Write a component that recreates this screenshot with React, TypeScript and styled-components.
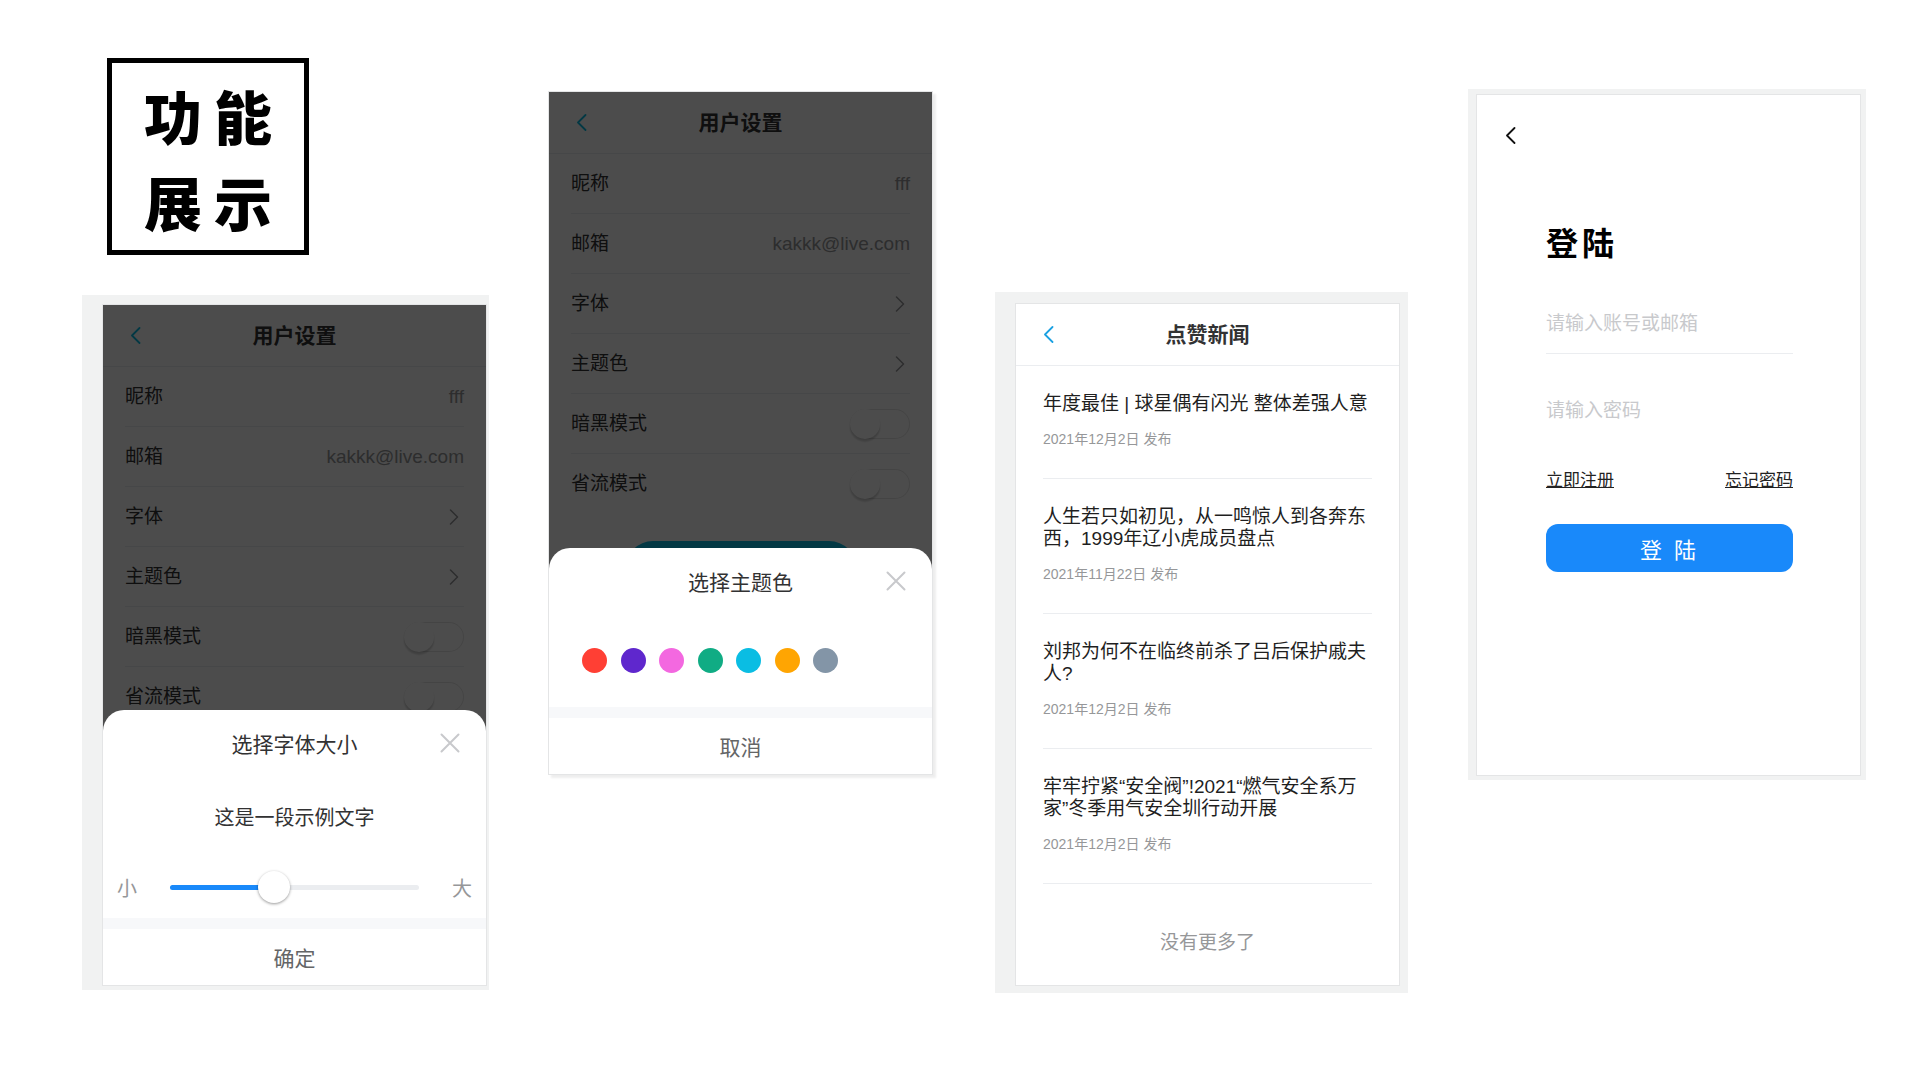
import React from 'react';
import styled, { createGlobalStyle } from 'styled-components';

const FONT = `"Liberation Sans", "Noto Sans CJK SC", sans-serif`;

const GlobalStyle = createGlobalStyle`
  html, body { margin: 0; padding: 0; background: #fff; }
  body { font-family: ${FONT}; width: 1920px; height: 1080px; overflow: hidden; }
  * { box-sizing: border-box; }
`;

// Page layout
const Page = styled.div`
  display: flex;
  align-items: flex-start;
  width: 1920px;
  height: 1080px;
  padding-left: 82px;
`;

const Column = styled.div<{ $top: number; $left?: number }>`
  display: flex;
  flex-direction: column;
  align-items: flex-start;
  margin-top: ${p => p.$top}px;
  margin-left: ${p => p.$left ?? 0}px;
`;

const TitleBox = styled.div`
  width: 202px;
  height: 197px;
  margin: 0 0 40px 25px;
  padding-top: 2px;
  border: 5px solid #000;
  display: flex;
  flex-direction: column;
  align-items: center;
  justify-content: center;
  font-family: "Noto Sans CJK SC", sans-serif;
  font-weight: 900;
  font-size: 58px;
  line-height: 86px;
  letter-spacing: 12px;
  color: #000;

  span {
    padding-left: 12px;
  }
`;

// Screenshot frames
const Frame = styled.div<{ $pad: string }>`
  padding: ${p => p.$pad};
  background: #f1f2f2;
`;

const Screen = styled.div<{ $height: number; $shadow?: boolean }>`
  position: relative;
  width: 385px;
  height: ${p => p.$height}px;
  background: #fff;
  overflow: hidden;
  border: 1px solid #e4e5e6;
  box-shadow: ${p => (p.$shadow ? '3px 3px 2px rgba(0, 0, 0, 0.07)' : 'none')};
`;

// Nav bar
const NavBar = styled.div`
  height: 62px;
  display: grid;
  grid-template-columns: 1fr auto 1fr;
  align-items: center;
  border-bottom: 1px solid #ebedf0;
`;

const NavBack = styled.span<{ $color: string }>`
  display: flex;
  padding-left: 27px;
  color: ${p => p.$color};
`;

const NavTitle = styled.div`
  font-size: 21px;
  font-weight: 700;
  color: #323233;
  line-height: 30px;
`;

// Settings rows
const Row = styled.div<{ $last?: boolean }>`
  height: 60px;
  margin: 0 22px;
  display: flex;
  align-items: center;
  justify-content: space-between;
  border-bottom: ${p => (p.$last ? 'none' : '1px solid #ebedf0')};
  font-size: 19px;
  line-height: 26px;
`;

const RowLabel = styled.span`
  color: #323233;
`;

const RowValue = styled.span`
  color: #969799;
`;

const Chevron = styled.span`
  display: flex;
  margin-right: 5px;
  color: #969799;
`;

const Switch = styled.span`
  width: 60px;
  height: 30px;
  border-radius: 15px;
  border: 1px solid rgba(0, 0, 0, 0.1);
  background: #fff;
  display: flex;
  align-items: center;
`;

const Knob = styled.span`
  width: 30px;
  height: 30px;
  margin: -1px;
  border-radius: 50%;
  background: #fff;
  box-shadow: 0 3px 1px 0 rgba(0, 0, 0, 0.05), 0 2px 2px 0 rgba(0, 0, 0, 0.1), 0 3px 3px 0 rgba(0, 0, 0, 0.05);
`;

const PillButton = styled.div`
  width: 232px;
  height: 56px;
  margin: 27px auto 0;
  border-radius: 28px;
  background: #0abde3;
`;

const Overlay = styled.div`
  position: absolute;
  inset: 0;
  background: rgba(0, 0, 0, 0.7);
`;

// Bottom sheet
const Sheet = styled.div`
  position: absolute;
  left: 0;
  right: 0;
  bottom: 0;
  background: #fff;
  border-radius: 21px 21px 0 0;
`;

const SheetHeader = styled.div`
  height: 66px;
  display: grid;
  grid-template-columns: 1fr auto 1fr;
  align-items: center;
  font-size: 21px;
  color: #323233;
`;

const CloseBtn = styled.span`
  justify-self: end;
  display: flex;
  padding-right: 26px;
  color: #c8c9cc;
`;

const SampleText = styled.div`
  height: 80px;
  display: flex;
  align-items: center;
  justify-content: center;
  font-size: 20px;
  color: #323233;
`;

const SliderRow = styled.div`
  height: 62px;
  padding: 0 14px;
  display: flex;
  align-items: center;
  gap: 33px;
  font-size: 20px;
  color: #969799;
`;

const Track = styled.div`
  position: relative;
  flex: 1;
  height: 5px;
  border-radius: 3px;
  background: #ebedf0;
`;

const TrackFill = styled.div`
  height: 100%;
  border-radius: 3px;
  background: #1989fa;
`;

const Thumb = styled.div`
  position: absolute;
  top: 50%;
  width: 32px;
  height: 32px;
  border-radius: 50%;
  background: #fff;
  transform: translate(-50%, -50%);
  box-shadow: 0 1px 3px rgba(0, 0, 0, 0.4);
`;

const DotRow = styled.div`
  height: 93px;
  padding-left: 33px;
  display: flex;
  align-items: center;
  gap: 13.5px;
`;

const Dot = styled.span<{ $color: string }>`
  width: 25px;
  height: 25px;
  border-radius: 50%;
  background: ${p => p.$color};
`;

const Band = styled.div`
  height: 11px;
  background: #f7f8fa;
`;

const SheetAction = styled.div`
  height: 56px;
  display: flex;
  align-items: center;
  justify-content: center;
  font-size: 21px;
  color: #646566;
`;

// News list
const NewsList = styled.div`
  padding: 0 27px;
`;

const NewsItem = styled.div`
  padding: 27px 0 30px;
  border-bottom: 1px solid #ebedf0;
`;

const NewsTitle = styled.div`
  font-size: 19px;
  line-height: 22px;
  color: #1f1f1f;
`;

const NewsDate = styled.div`
  margin-top: 15px;
  font-size: 14px;
  line-height: 18px;
  color: #969799;
`;

const NoMore = styled.div`
  padding-top: 47px;
  text-align: center;
  font-size: 19px;
  line-height: 24px;
  color: #969799;
`;

// Login
const LoginBack = styled.div`
  display: flex;
  height: 17px;
  margin: 32px 0 0 28px;
  color: #111;
`;

const LoginTitle = styled.div`
  margin: 80px 0 0 69px;
  font-size: 32px;
  line-height: 40px;
  font-weight: 700;
  letter-spacing: 4px;
  color: #000;
`;

const LoginForm = styled.div`
  width: 247px;
  margin: 30px 0 0 69px;
  display: flex;
  flex-direction: column;
`;

const Field = styled.div<{ $gap?: number; $line?: boolean }>`
  height: 60px;
  margin-top: ${p => p.$gap ?? 0}px;
  display: flex;
  align-items: center;
  border-bottom: 1px solid ${p => (p.$line ? '#ebedf0' : 'transparent')};
`;

const FieldInput = styled.input`
  width: 100%;
  border: none;
  outline: none;
  padding: 0;
  background: transparent;
  font-family: ${FONT};
  font-size: 19px;
  color: #323233;

  &::placeholder {
    color: #c8c9cc;
  }
`;

const LinkRow = styled.div`
  margin-top: 28px;
  display: flex;
  justify-content: space-between;
  font-size: 17px;
  line-height: 24px;
`;

const TextLink = styled.a`
  color: #222;
  text-decoration: underline;
`;

const PrimaryButton = styled.button`
  height: 48px;
  margin-top: 31px;
  border: none;
  border-radius: 12px;
  background: #1989fa;
  color: #fff;
  font-family: ${FONT};
  font-size: 22px;
  letter-spacing: 3px;
`;

const BackIcon = () => (
  <svg width="11" height="17" viewBox="0 0 11 17" fill="none">
    <path d="M9.5 1 2 8.5 9.5 16" stroke="currentColor" strokeWidth="1.8" strokeLinecap="round" strokeLinejoin="round" />
  </svg>
);

const ChevronIcon = () => (
  <svg width="10" height="16" viewBox="0 0 10 16" fill="none">
    <path d="M1.5 1 8.5 8 1.5 15" stroke="currentColor" strokeWidth="1.5" strokeLinecap="round" strokeLinejoin="round" />
  </svg>
);

const CloseIcon = () => (
  <svg width="20" height="20" viewBox="0 0 20 20" fill="none">
    <path d="M1.5 1.5 18.5 18.5M18.5 1.5 1.5 18.5" stroke="currentColor" strokeWidth="2" strokeLinecap="round" />
  </svg>
);

const THEME_COLORS = ['#ff3f34', '#5f27cd', '#f368e0', '#10ac84', '#0abde3', '#ffa502', '#8395a7'];

const NEWS = [
  { title: '年度最佳 | 球星偶有闪光 整体差强人意', date: '2021年12月2日 发布' },
  { title: '人生若只如初见，从一鸣惊人到各奔东西，1999年辽小虎成员盘点', date: '2021年11月22日 发布' },
  { title: '刘邦为何不在临终前杀了吕后保护戚夫人?', date: '2021年12月2日 发布' },
  { title: '牢牢拧紧“安全阀”!2021“燃气安全系万家”冬季用气安全圳行动开展', date: '2021年12月2日 发布' },
];

// Settings page under a popup
const SettingsScreen: React.FC<{ height: number; shadow?: boolean; children: React.ReactNode }> = ({
  height,
  shadow,
  children,
}) => (
  <Screen $height={height} $shadow={shadow}>
    <NavBar>
      <NavBack $color="#0abde3">
        <BackIcon />
      </NavBack>
      <NavTitle>用户设置</NavTitle>
      <span />
    </NavBar>
    <Row>
      <RowLabel>昵称</RowLabel>
      <RowValue>fff</RowValue>
    </Row>
    <Row>
      <RowLabel>邮箱</RowLabel>
      <RowValue>kakkk@live.com</RowValue>
    </Row>
    <Row>
      <RowLabel>字体</RowLabel>
      <Chevron>
        <ChevronIcon />
      </Chevron>
    </Row>
    <Row>
      <RowLabel>主题色</RowLabel>
      <Chevron>
        <ChevronIcon />
      </Chevron>
    </Row>
    <Row>
      <RowLabel>暗黑模式</RowLabel>
      <Switch>
        <Knob />
      </Switch>
    </Row>
    <Row $last>
      <RowLabel>省流模式</RowLabel>
      <Switch>
        <Knob />
      </Switch>
    </Row>
    <PillButton />
    <Overlay />
    <Sheet>{children}</Sheet>
  </Screen>
);

const App: React.FC = () => {
  const fontLevel = 41.6;

  return (
    <>
      <GlobalStyle />
      <Page>
        <Column $top={58}>
          <TitleBox>
            <span>功能</span>
            <span>展示</span>
          </TitleBox>
          <Frame $pad="9px 2px 4px 20px">
            <SettingsScreen height={682}>
              <SheetHeader>
                <span />
                <span>选择字体大小</span>
                <CloseBtn>
                  <CloseIcon />
                </CloseBtn>
              </SheetHeader>
              <SampleText>这是一段示例文字</SampleText>
              <SliderRow>
                <span>小</span>
                <Track>
                  <TrackFill style={{ width: `${fontLevel}%` }} />
                  <Thumb style={{ left: `${fontLevel}%` }} />
                </Track>
                <span>大</span>
              </SliderRow>
              <Band />
              <SheetAction>确定</SheetAction>
            </SettingsScreen>
          </Frame>
        </Column>

        <Column $top={91} $left={59}>
          <SettingsScreen height={684} shadow>
            <SheetHeader>
              <span />
              <span>选择主题色</span>
              <CloseBtn>
                <CloseIcon />
              </CloseBtn>
            </SheetHeader>
            <DotRow>
              {THEME_COLORS.map(c => (
                <Dot key={c} $color={c} />
              ))}
            </DotRow>
            <Band />
            <SheetAction>取消</SheetAction>
          </SettingsScreen>
        </Column>

        <Column $top={292} $left={62}>
          <Frame $pad="11px 8px 7px 20px">
            <Screen $height={683}>
              <NavBar>
                <NavBack $color="#1ba1e2">
                  <BackIcon />
                </NavBack>
                <NavTitle>点赞新闻</NavTitle>
                <span />
              </NavBar>
              <NewsList>
                {NEWS.map(n => (
                  <NewsItem key={n.title}>
                    <NewsTitle>{n.title}</NewsTitle>
                    <NewsDate>{n.date}</NewsDate>
                  </NewsItem>
                ))}
              </NewsList>
              <NoMore>没有更多了</NoMore>
            </Screen>
          </Frame>
        </Column>

        <Column $top={89} $left={60}>
          <Frame $pad="5px 5px 4px 8px">
            <Screen $height={682}>
              <LoginBack>
                <BackIcon />
              </LoginBack>
              <LoginTitle>登陆</LoginTitle>
              <LoginForm>
                <Field $line>
                  <FieldInput placeholder="请输入账号或邮箱" />
                </Field>
                <Field $gap={27}>
                  <FieldInput type="password" placeholder="请输入密码" />
                </Field>
                <LinkRow>
                  <TextLink>立即注册</TextLink>
                  <TextLink>忘记密码</TextLink>
                </LinkRow>
                <PrimaryButton>登 陆</PrimaryButton>
              </LoginForm>
            </Screen>
          </Frame>
        </Column>
      </Page>
    </>
  );
};

export default App;
